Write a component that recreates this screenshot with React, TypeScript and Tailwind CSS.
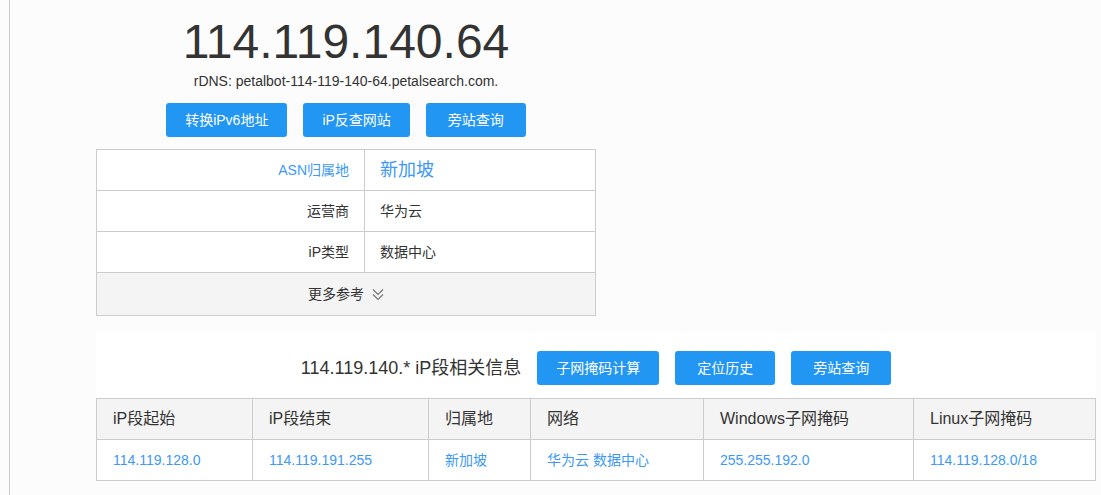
import React from 'react'

const font = { fontFamily: '"Liberation Sans", "Noto Sans CJK SC", sans-serif' }

function BlueButton({ children }: { children: React.ReactNode }) {
  return (
    <button className="h-[34px] min-w-[100px] px-[19px] rounded-[3px] bg-[#2196f3] text-white text-[14px] leading-[34px] whitespace-nowrap">
      {children}
    </button>
  )
}

function ChevronsDown() {
  return (
    <svg width="12" height="13" viewBox="0 0 12 13" fill="none" stroke="#777" strokeWidth="1.2">
      <path d="M1 1.5 L6 6.5 L11 1.5" />
      <path d="M1 6.5 L6 11.5 L11 6.5" />
    </svg>
  )
}

const rows = [
  { label: '运营商', value: '华为云' },
  { label: 'iP类型', value: '数据中心' },
]

const cols = [
  { head: 'iP段起始', val: '114.119.128.0', w: 'w-[156px]' },
  { head: 'iP段结束', val: '114.119.191.255', w: 'w-[176px]' },
  { head: '归属地', val: '新加坡', w: 'w-[102px]' },
  { head: '网络', val: '华为云 数据中心', w: 'w-[173px]' },
  { head: 'Windows子网掩码', val: '255.255.192.0', w: 'w-[210px]' },
  { head: 'Linux子网掩码', val: '114.119.128.0/18', w: 'flex-1' },
]

export default function App() {
  return (
    <div className="min-h-screen bg-[#fcfcfc] text-[#333]" style={font}>
      <div className="ml-[9px] min-h-[495px] border-l border-[#cccccc] pl-[86px]">
        {/* IP header block */}
        <div className="w-[500px] flex flex-col items-center pt-[13px]">
          <h1 className="text-[48px] leading-[58px] text-[#333]">114.119.140.64</h1>
          <p className="text-[14px] leading-[20px] text-[#333]">rDNS: petalbot-114-119-140-64.petalsearch.com.</p>
          <div className="flex gap-4 mt-3">
            <BlueButton>转换iPv6地址</BlueButton>
            <BlueButton>iP反查网站</BlueButton>
            <BlueButton>旁站查询</BlueButton>
          </div>
        </div>

        {/* info table */}
        <div className="w-[500px] mt-3 border border-[#cccccc] bg-white text-[14px]">
          <div className="flex h-[41px] border-b border-[#cccccc]">
            <div className="w-[268px] flex items-center justify-end pr-[15px] border-r border-[#cccccc] text-[#3d99f5]">ASN归属地</div>
            <div className="flex-1 flex items-center pl-[15px] text-[18px] text-[#3d99f5]">新加坡</div>
          </div>
          {rows.map((r) => (
            <div key={r.label} className="flex h-[41px] border-b border-[#cccccc]">
              <div className="w-[268px] flex items-center justify-end pr-[15px] border-r border-[#cccccc]">{r.label}</div>
              <div className="flex-1 flex items-center pl-[15px]">{r.value}</div>
            </div>
          ))}
          <div className="h-[42px] flex items-center justify-center gap-[8px] bg-[#f4f4f4] pt-[1px]">
            <span>更多参考</span>
            <ChevronsDown />
          </div>
        </div>

        {/* ip range section */}
        <div className="w-[1000px] mt-[16px] bg-white">
          <div className="flex items-center justify-center gap-4 pt-[19px] pb-[13px]">
            <span className="text-[18px]">114.119.140.* iP段相关信息</span>
            <BlueButton>子网掩码计算</BlueButton>
            <BlueButton>定位历史</BlueButton>
            <BlueButton>旁站查询</BlueButton>
          </div>
          <div className="border border-[#cccccc]">
            <div className="flex h-[41px] bg-[#f4f4f4] border-b border-[#cccccc] text-[16px]">
              {cols.map((c, i) => (
                <div key={c.head} className={`${c.w} flex items-center pl-4 ${i < cols.length - 1 ? 'border-r border-[#cccccc]' : ''}`}>
                  {c.head}
                </div>
              ))}
            </div>
            <div className="flex h-[40px] text-[14px] text-[#3d99f5]">
              {cols.map((c, i) => (
                <div key={c.head} className={`${c.w} flex items-center pl-4 ${i < cols.length - 1 ? 'border-r border-[#cccccc]' : ''}`}>
                  {c.val}
                </div>
              ))}
            </div>
          </div>
        </div>
      </div>
    </div>
  )
}
